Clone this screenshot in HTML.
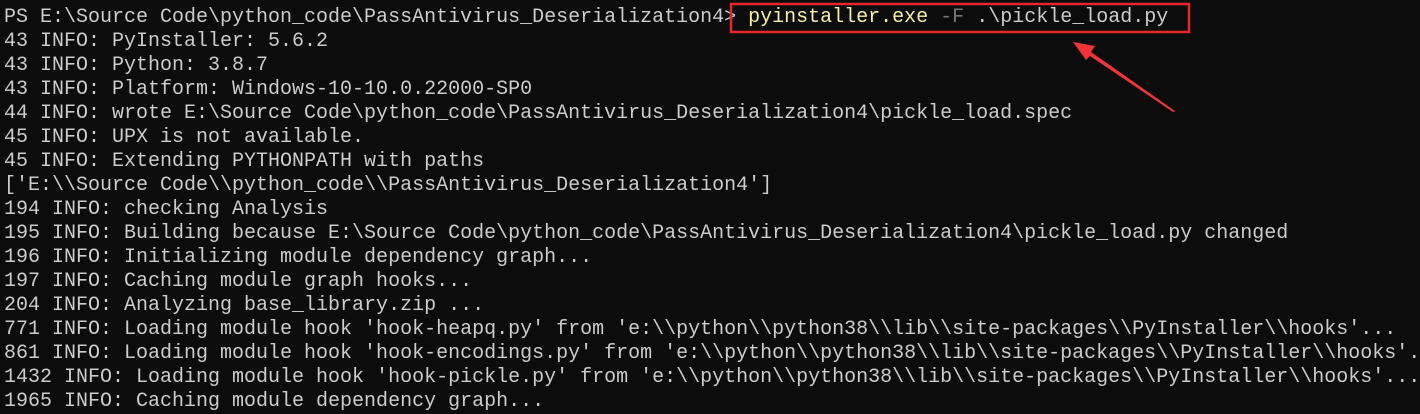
<!DOCTYPE html>
<html><head><meta charset="utf-8"><style>
html,body{margin:0;padding:0;background:#0c0c0c;width:1420px;height:410px;overflow:hidden}
pre{margin:0;position:absolute;left:4px;top:6px;font-family:"Liberation Mono",monospace;font-size:20px;line-height:24px;color:#cccccc;white-space:pre}
.y{color:#f9f1a5}.g{color:#767676}
</style></head><body>
<pre>PS E:\Source Code\python_code\PassAntivirus_Deserialization4&gt; <span class="y">pyinstaller.exe</span> <span class="g">-F</span> .\pickle_load.py
43 INFO: PyInstaller: 5.6.2
43 INFO: Python: 3.8.7
43 INFO: Platform: Windows-10-10.0.22000-SP0
44 INFO: wrote E:\Source Code\python_code\PassAntivirus_Deserialization4\pickle_load.spec
45 INFO: UPX is not available.
45 INFO: Extending PYTHONPATH with paths
['E:\\Source Code\\python_code\\PassAntivirus_Deserialization4']
194 INFO: checking Analysis
195 INFO: Building because E:\Source Code\python_code\PassAntivirus_Deserialization4\pickle_load.py changed
196 INFO: Initializing module dependency graph...
197 INFO: Caching module graph hooks...
204 INFO: Analyzing base_library.zip ...
771 INFO: Loading module hook 'hook-heapq.py' from 'e:\\python\\python38\\lib\\site-packages\\PyInstaller\\hooks'...
861 INFO: Loading module hook 'hook-encodings.py' from 'e:\\python\\python38\\lib\\site-packages\\PyInstaller\\hooks'...
1432 INFO: Loading module hook 'hook-pickle.py' from 'e:\\python\\python38\\lib\\site-packages\\PyInstaller\\hooks'...
1965 INFO: Caching module dependency graph...</pre>
<svg width="1420" height="410" style="position:absolute;left:0;top:0">
<rect x="731" y="4" width="458" height="28" fill="none" stroke="#e8262b" stroke-width="2.5"/>
<polygon points="1175,111 1173,112 1090,56 1086,60 1073,42 1095,46 1091,52" fill="#f0343a"/>
</svg>
</body></html>
